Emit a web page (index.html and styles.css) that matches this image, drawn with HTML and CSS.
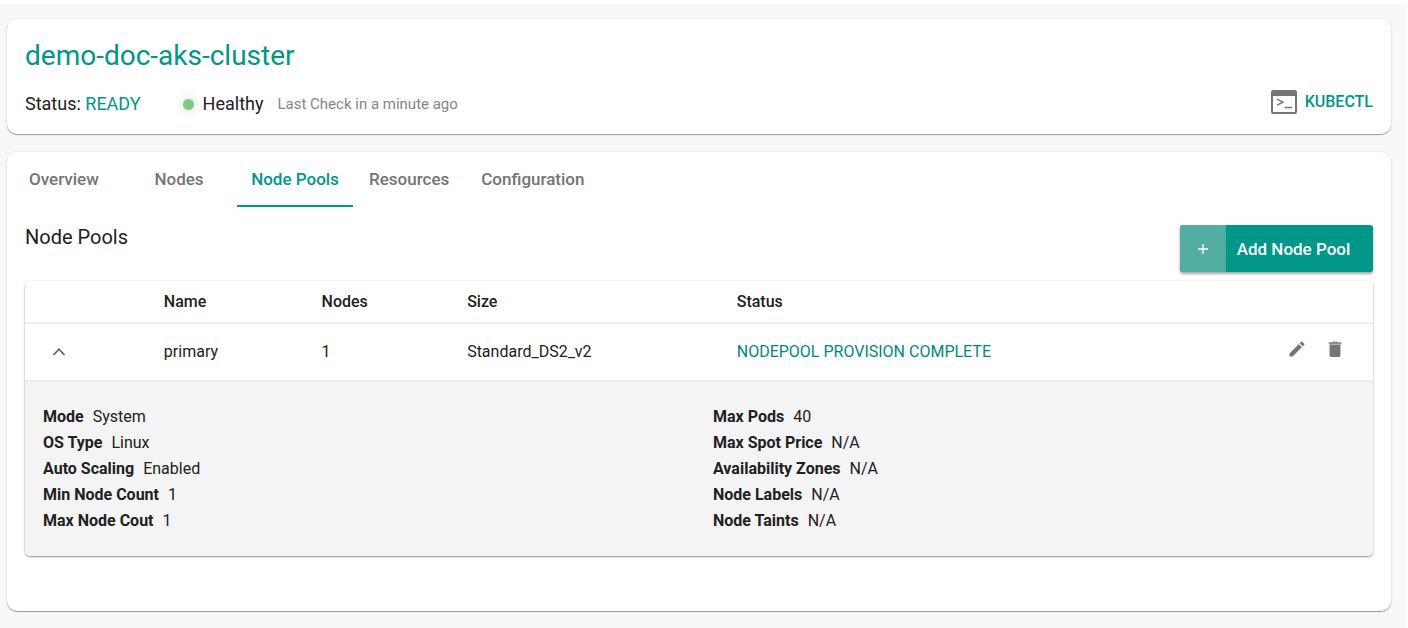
FILE: index.html
```html
<!DOCTYPE html>
<html lang="en">
<head>
<meta charset="utf-8">
<title>demo-doc-aks-cluster</title>
<meta name="viewport" content="width=device-width, initial-scale=1">
<link rel="stylesheet" href="styles.css">
</head>
<body>
<main class="page">
  <header class="card cluster">
    <h1 class="cluster-name">demo-doc-aks-cluster</h1>
    <div class="cluster-row">
      <span class="cluster-status">Status: <span class="accent">READY</span></span>
      <span class="health"><span class="health-dot"></span>Healthy</span>
      <span class="last-check">Last Check in a minute ago</span>
      <button class="kubectl" type="button">
        <svg class="kubectl-icon" viewBox="0 0 26 24" aria-hidden="true">
          <rect x="1" y="1" width="24" height="22" rx="1.5" fill="none" stroke="#757575" stroke-width="2"/>
          <path d="M1 1h24v5H1z" fill="#757575"/>
          <path d="M6 9.2l6 3-6 3M13.5 17.5h7.5" fill="none" stroke="#757575" stroke-width="1.5"/>
        </svg>
        KUBECTL
      </button>
    </div>
  </header>

  <section class="card detail">
    <nav class="tabs" role="tablist">
      <button class="tab tab-first" role="tab" type="button">Overview</button>
      <button class="tab tab-wide" role="tab" type="button">Nodes</button>
      <button class="tab tab-wide tab-active" role="tab" type="button" aria-selected="true">Node Pools</button>
      <button class="tab" role="tab" type="button">Resources</button>
      <button class="tab" role="tab" type="button">Configuration</button>
    </nav>
    <div class="section-head">
      <h2 class="section-title">Node Pools</h2>
      <button class="add" type="button">
        <span class="add-icon">
          <svg width="12" height="12" viewBox="0 0 12 12" aria-hidden="true"><path d="M6 1v10M1 6h10" stroke="#fff" stroke-width="1.3"/></svg>
        </span>
        <span class="add-label">Add Node Pool</span>
      </button>
    </div>
    <div class="pools">
      <table class="pool-table">
        <colgroup><col class="col-toggle"><col class="col-name"><col class="col-nodes"><col class="col-size"><col class="col-status"><col class="col-actions"></colgroup>
        <thead>
          <tr><th></th><th>Name</th><th>Nodes</th><th>Size</th><th>Status</th><th></th></tr>
        </thead>
        <tbody>
          <tr>
            <td class="toggle-cell">
              <button class="icon-button" type="button" aria-label="Collapse primary">
                <svg width="14" height="10" viewBox="0 0 14 10" aria-hidden="true"><path d="M1.5 8L7 2.2 12.5 8" fill="none" stroke="#616161" stroke-width="1.7"/></svg>
              </button>
            </td>
            <td>primary</td>
            <td>1</td>
            <td>Standard_DS2_v2</td>
            <td class="pool-status">NODEPOOL PROVISION COMPLETE</td>
            <td>
              <div class="actions">
                <button class="icon-button" type="button" aria-label="Edit primary">
                  <svg width="20" height="20" viewBox="0 0 24 24" fill="#757575" aria-hidden="true"><path d="M3 17.25V21h3.75L17.81 9.94l-3.75-3.75L3 17.25zM20.71 7.04a1 1 0 0 0 0-1.41l-2.34-2.34a1 1 0 0 0-1.41 0l-1.83 1.83 3.75 3.75 1.83-1.83z"/></svg>
                </button>
                <button class="icon-button" type="button" aria-label="Delete primary">
                  <svg width="20" height="20" viewBox="0 0 24 24" fill="#757575" aria-hidden="true"><path d="M5.500 7v12.500c0 1.100.9 2 2 2h9c1.100 0 2-.9 2-2V7z"/><path d="M19.500 4h-4l-1-1h-5l-1 1h-4v2.500h15z" fill="#8a8a8a"/></svg>
                </button>
              </div>
            </td>
          </tr>
        </tbody>
      </table>
      <div class="pool-info">
        <dl class="facts">
          <div class="fact"><dt>Mode</dt><dd>System</dd></div>
          <div class="fact"><dt>OS Type</dt><dd>Linux</dd></div>
          <div class="fact"><dt>Auto Scaling</dt><dd>Enabled</dd></div>
          <div class="fact"><dt>Min Node Count</dt><dd>1</dd></div>
          <div class="fact"><dt>Max Node Cout</dt><dd>1</dd></div>
        </dl>
        <dl class="facts">
          <div class="fact"><dt>Max Pods</dt><dd>40</dd></div>
          <div class="fact"><dt>Max Spot Price</dt><dd>N/A</dd></div>
          <div class="fact"><dt>Availability Zones</dt><dd>N/A</dd></div>
          <div class="fact"><dt>Node Labels</dt><dd>N/A</dd></div>
          <div class="fact"><dt>Node Taints</dt><dd>N/A</dd></div>
        </dl>
      </div>
    </div>
  </section>
</main>
</body>
</html>
```
FILE: styles.css
```css
* {
  box-sizing: border-box;
}

body {
  margin: 0;
  padding-top: 4px;
  padding-right: 2px;
  background: #fff;
  color: #212121;
  font: 16px/20px Roboto, "Open Sans", sans-serif;
}

button {
  padding: 0;
  border: 0;
  background: none;
  color: inherit;
  font: inherit;
  cursor: pointer;
}

svg {
  display: block;
}

.page {
  display: flex;
  flex-direction: column;
  gap: 18px;
  min-height: calc(100vh - 4px);
  padding: 15px 15px 15px 7px;
  background: #f7f8fa;
}

.card {
  border-radius: 10px;
  background: #fff;
  box-shadow: 0 1px 1px rgba(0, 0, 0, 0.36), 0 0 3px rgba(0, 0, 0, 0.08);
}

.cluster {
  padding: 20px 18px 17px;
}

.cluster-name {
  margin: 0;
  color: #009688;
  font-size: 28px;
  font-weight: 400;
  line-height: 34px;
}

.cluster-row {
  display: flex;
  align-items: center;
  height: 26px;
  margin-top: 18px;
}

.cluster-status,
.health {
  font-size: 18px;
}

.accent {
  color: #009688;
}

.health {
  display: flex;
  align-items: center;
  gap: 9px;
  margin-left: 42px;
}

.health-dot {
  width: 11px;
  height: 11px;
  border-radius: 50%;
  background: #81c784;
  box-shadow: 0 0 8px 2px rgba(129, 199, 132, 0.3);
}

.last-check {
  margin-left: 14px;
  color: #858585;
  font-size: 15px;
}

.kubectl {
  display: flex;
  align-items: center;
  gap: 8px;
  margin: 0 0 4px auto;
  color: #009688;
  font-weight: 500;
}

.kubectl-icon {
  width: 26px;
  height: 24px;
}

.detail {
  padding: 0 18px 55px;
}

.tabs {
  display: flex;
  height: 55px;
}

.tab {
  padding: 0 16px;
  border-bottom: 2px solid transparent;
  color: #757575;
  font-size: 17px;
  font-weight: 500;
  white-space: nowrap;
}

.tab-first {
  width: 96px;
  padding: 0 4px;
  text-align: left;
}

.tab-wide {
  width: 116px;
  padding: 0;
}

.tab-active {
  border-bottom-color: #009688;
  color: #009688;
}

.section-head {
  display: flex;
  align-items: flex-start;
  justify-content: space-between;
  padding-top: 18px;
}

.section-title {
  margin: 0;
  font-size: 20px;
  font-weight: 400;
  line-height: 24px;
}

.add {
  display: flex;
  height: 47px;
  overflow: hidden;
  border-radius: 3px;
  background: #009688;
  box-shadow: 0 2px 3px rgba(0, 0, 0, 0.35);
  color: #fff;
  font-size: 17px;
  font-weight: 500;
}

.add-icon {
  display: flex;
  align-items: center;
  justify-content: center;
  width: 46px;
  height: 100%;
  background: #52ada2;
}

.add-label {
  align-self: center;
  width: 147px;
  padding-right: 12px;
}

.pools {
  margin-top: 9px;
  overflow: hidden;
  border-radius: 5px;
  box-shadow: 0 1px 2px rgba(0, 0, 0, 0.42), 0 0 2px rgba(0, 0, 0, 0.08);
}

.pool-table {
  width: 100%;
  border-collapse: collapse;
  table-layout: fixed;
}

.pool-table th,
.pool-table td {
  padding: 0;
  border-bottom: 2px solid #eee;
  text-align: left;
}

.pool-table th {
  height: 42px;
  font-weight: 500;
}

.pool-table td {
  height: 58px;
}

.col-toggle {
  width: 10.3%;
}

.col-name {
  width: 11.7%;
}

.col-nodes {
  width: 10.8%;
}

.col-size {
  width: 20%;
}

.col-actions {
  width: 7%;
}

.pool-table .toggle-cell {
  padding-left: 27px;
}

.pool-table .pool-status {
  color: #00897b;
}

.actions {
  display: flex;
  justify-content: flex-end;
  gap: 18px;
  padding: 0 28px 6px 0;
}

.pool-info {
  display: grid;
  grid-template-columns: 1fr 1fr;
  gap: 10px;
  padding: 22px 0 22px 18px;
  background: #f4f4f4;
}

.facts {
  display: flex;
  flex-direction: column;
  margin: 0;
}

.fact {
  display: flex;
  gap: 9px;
  line-height: 26px;
}

.fact dt {
  font-weight: 700;
}

.fact dd {
  margin: 0;
}
```
